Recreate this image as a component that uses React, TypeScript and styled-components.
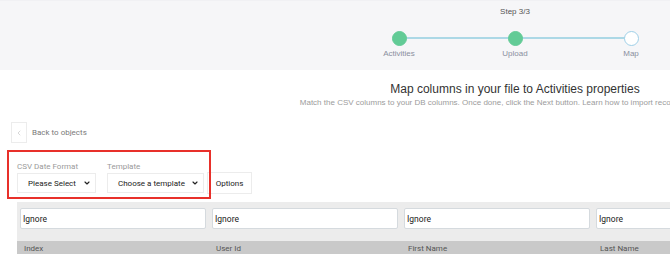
import React from 'react';
import styled, { createGlobalStyle } from 'styled-components';
import { ChevronDown, ChevronLeft } from 'lucide-react';

const GlobalStyle = createGlobalStyle`
  body {
    margin: 0;
    background: #ffffff;
    overflow: hidden;
    font-family: Roboto, "Liberation Sans", sans-serif;
  }
`

const Page = styled.div`
  width: 1030px;
`

const StepHeader = styled.div`
  height: 70px;
  background: #f6f6f8;
  border-top: 1px solid #f1f1f4;
  box-sizing: border-box;
  padding-top: 6px;
  font-family: "Liberation Sans", Arial, sans-serif;
`

const StepCount = styled.div`
  text-align: center;
  font-size: 8px;
  line-height: 10px;
  color: #555;
`

const StepList = styled.div`
  display: grid;
  grid-template-columns: repeat(3, 116px);
  justify-content: center;
  margin-top: 14px;
`

const Step = styled.div<{ $first?: boolean }>`
  position: relative;
  display: flex;
  flex-direction: column;
  align-items: center;

  &::before {
    content: '';
    display: ${p => (p.$first ? 'none' : 'block')};
    position: absolute;
    top: 6px;
    left: -50%;
    width: 100%;
    height: 2px;
    background: #acd8e6;
  }
`

const Dot = styled.div<{ $done?: boolean }>`
  position: relative;
  z-index: 1;
  width: 15px;
  height: 15px;
  box-sizing: border-box;
  border-radius: 50%;
  background: ${p => (p.$done ? '#62cb96' : '#ffffff')};
  border: 1px solid ${p => (p.$done ? '#62cb96' : '#9fd0e8')};
`

const StepLabel = styled.div`
  margin-top: 3px;
  font-size: 8px;
  line-height: 10px;
  color: #8a8f9e;
`

const Intro = styled.div`
  text-align: center;
  font-family: "Liberation Sans", Arial, sans-serif;
  margin-top: 11px;
`

const Title = styled.div`
  font-size: 12px;
  line-height: 16px;
  color: #333;
`

const Subtitle = styled.div`
  margin-top: 1px;
  font-size: 8px;
  line-height: 10px;
  color: #9c9c9c;
  white-space: nowrap;
`

const Toolbar = styled.div`
  display: flex;
  align-items: center;
  gap: 5px;
  margin-top: 14px;
  padding-left: 11px;
`

const BackButton = styled.button`
  width: 16px;
  height: 21px;
  padding: 0;
  display: flex;
  align-items: center;
  justify-content: center;
  background: #fff;
  border: 1px solid #ececec;
  color: #b0b0b0;
`

const BackLabel = styled.span`
  font-size: 8px;
  color: #7a7a7a;
`

const Filters = styled.div`
  position: relative;
  display: flex;
  align-items: flex-end;
  gap: 11px;
  margin-top: 7px;
  padding: 12px 0 5px 17px;
`

const Highlight = styled.div`
  position: absolute;
  left: 7px;
  top: 0;
  width: 204px;
  height: 49px;
  box-sizing: border-box;
  border: 2px solid #e8302a;
  pointer-events: none;
`

const Field = styled.div`
  display: flex;
  flex-direction: column;
  gap: 1px;
`

const FieldLabel = styled.div`
  font-size: 8px;
  line-height: 10px;
  color: #9a9a9a;
`

const Select = styled.div<{ $width: number }>`
  width: ${p => p.$width}px;
  height: 20px;
  box-sizing: border-box;
  border: 1px solid #ececec;
  background: #fff;
  display: flex;
  align-items: center;
  justify-content: space-between;
  padding: 0 4px 0 10px;
  font-size: 8px;
  color: #222;
`

const OptionsButton = styled.button`
  margin-left: -8px;
  margin-bottom: -1px;
  width: 45px;
  height: 22px;
  padding: 0;
  background: #fff;
  border: 1px solid #ececec;
  font-family: Roboto, sans-serif;
  font-size: 8px;
  color: #222;
`

const MappingTable = styled.div`
  margin: 4px 0 0 17px;
  background: #ececec;
  padding-top: 6px;
`

const Row = styled.div`
  display: grid;
  grid-template-columns: repeat(4, 192px);
`

const MapInput = styled.input`
  margin: 0 3px;
  height: 21px;
  box-sizing: border-box;
  border: 1px solid #d5dade;
  border-radius: 2px;
  padding: 0 2px;
  font-family: Roboto, sans-serif;
  font-size: 8.5px;
  color: #222;
  background: #fff;
`

const HeaderRow = styled(Row)`
  margin-top: 12px;
  background: #c9c9c9;
`

const HeaderCell = styled.div`
  padding-left: 7px;
  font-size: 8px;
  line-height: 16px;
  color: #555;
`

const steps = ['Activities', 'Upload', 'Map'];
const columns = ['Index', 'User Id', 'First Name', 'Last Name'];

export default function App() {
  return (
    <Page>
      <GlobalStyle />
      <StepHeader>
        <StepCount>Step 3/3</StepCount>
        <StepList>
          {steps.map((s, i) => (
            <Step key={s} $first={i === 0}>
              <Dot $done={i < 2} />
              <StepLabel>{s}</StepLabel>
            </Step>
          ))}
        </StepList>
      </StepHeader>

      <Intro>
        <Title>Map columns in your file to Activities properties</Title>
        <Subtitle>
          Match the CSV columns to your DB columns. Once done, click the Next button. Learn how to import records into Activities
        </Subtitle>
      </Intro>

      <Toolbar>
        <BackButton>
          <ChevronLeft size={8} strokeWidth={1.5} />
        </BackButton>
        <BackLabel>Back to objects</BackLabel>
      </Toolbar>

      <Filters>
        <Highlight />
        <Field>
          <FieldLabel>CSV Date Format</FieldLabel>
          <Select $width={79}>
            Please Select
            <ChevronDown size={8} strokeWidth={3.5} />
          </Select>
        </Field>
        <Field>
          <FieldLabel>Template</FieldLabel>
          <Select $width={97}>
            Choose a template
            <ChevronDown size={8} strokeWidth={3.5} />
          </Select>
        </Field>
        <OptionsButton>Options</OptionsButton>
      </Filters>

      <MappingTable>
        <Row>
          {columns.map(c => (
            <MapInput key={c} defaultValue="Ignore" />
          ))}
        </Row>
        <HeaderRow>
          {columns.map(c => (
            <HeaderCell key={c}>{c}</HeaderCell>
          ))}
        </HeaderRow>
      </MappingTable>
    </Page>
  );
}
